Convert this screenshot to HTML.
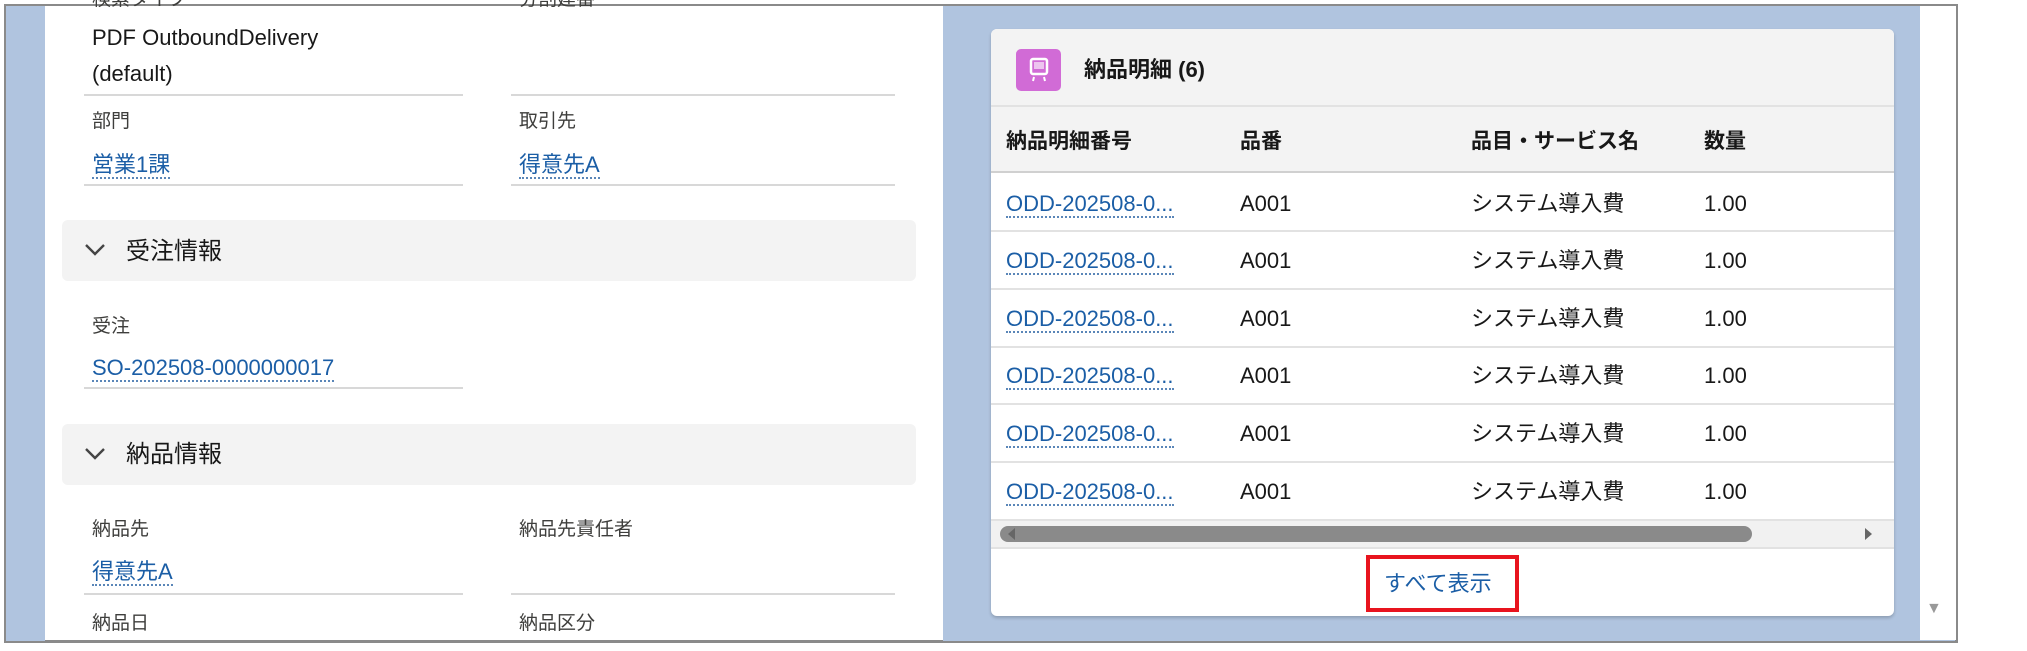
<!DOCTYPE html>
<html><head><meta charset="utf-8"><style>
*{margin:0;padding:0;box-sizing:border-box}
body{width:2027px;height:651px;background:#fff;position:relative;overflow:hidden;font-family:"Liberation Sans","Noto Sans CJK JP",sans-serif;color:#181818}
.a{position:absolute;white-space:nowrap}
.t{font-size:22px;line-height:28px;transform:translateY(-14px)}
.l{font-size:19px;line-height:24px;transform:translateY(-12px);color:#3e3e3c}
.lk{color:#1b5ea6;border-bottom:2px dotted #5a86b8;line-height:24px}
.hl{position:absolute;height:2px;background:#d8d8d8}
.rl{position:absolute;left:991px;width:903px;height:2px;background:#e2e2e2}
</style></head><body>
<div class="a" style="left:4px;top:4px;width:1954px;height:639px;background:#b0c4df;border:2px solid #8a8a8a;border-right:3px solid #8a8a8a"></div>
<div class="a" style="left:45px;top:6px;width:898px;height:634px;background:#fff"></div>
<div class="a" style="left:1920px;top:6px;width:36px;height:634px;background:#fff"></div>
<div class="a" style="left:1926px;top:600px;font-size:16px;color:#999">▼</div>

<div class="a l" style="left:92px;top:0px">検索タイプ</div>
<div class="a l" style="left:519px;top:0px">分割建番</div>
<div class="a t" style="left:92px;top:38px">PDF OutboundDelivery</div>
<div class="a t" style="left:92px;top:74px">(default)</div>
<div class="hl" style="left:84px;top:94px;width:379px"></div>
<div class="hl" style="left:511px;top:94px;width:384px"></div>
<div class="a l" style="left:92px;top:122px">部門</div>
<div class="a l" style="left:519px;top:122px">取引先</div>
<div class="a t" style="left:92px;top:165px"><span class="lk">営業1課</span></div>
<div class="a t" style="left:519px;top:165px"><span class="lk">得意先A</span></div>
<div class="hl" style="left:84px;top:184px;width:379px"></div>
<div class="hl" style="left:511px;top:184px;width:384px"></div>

<div class="a" style="left:62px;top:220px;width:854px;height:61px;background:#f3f3f3;border-radius:6px"></div>
<svg class="a" style="left:84px;top:243px" width="22" height="14"><path d="M2 2 L11 11 L20 2" fill="none" stroke="#444" stroke-width="2.4"/></svg>
<div class="a t" style="left:126px;top:252px;font-size:24px">受注情報</div>
<div class="a l" style="left:92px;top:327px">受注</div>
<div class="a t" style="left:92px;top:368px"><span class="lk">SO-202508-0000000017</span></div>
<div class="hl" style="left:84px;top:387px;width:379px"></div>

<div class="a" style="left:62px;top:424px;width:854px;height:61px;background:#f3f3f3;border-radius:6px"></div>
<svg class="a" style="left:84px;top:447px" width="22" height="14"><path d="M2 2 L11 11 L20 2" fill="none" stroke="#444" stroke-width="2.4"/></svg>
<div class="a t" style="left:126px;top:455px;font-size:24px">納品情報</div>
<div class="a l" style="left:92px;top:530px">納品先</div>
<div class="a l" style="left:519px;top:530px">納品先責任者</div>
<div class="a t" style="left:92px;top:572px"><span class="lk">得意先A</span></div>
<div class="hl" style="left:84px;top:593px;width:379px"></div>
<div class="hl" style="left:511px;top:593px;width:384px"></div>
<div class="a l" style="left:92px;top:624px">納品日</div>
<div class="a l" style="left:519px;top:624px">納品区分</div>
<div class="a" style="left:45px;top:640px;width:898px;height:3px;background:#8a8a8a"></div>

<div class="a" style="left:991px;top:29px;width:903px;height:587px;background:#fff;border-radius:6px;box-shadow:0 2px 3px rgba(0,0,0,.2)"></div>
<div class="a" style="left:991px;top:29px;width:903px;height:77px;background:#f3f3f3;border-radius:6px 6px 0 0"></div>
<div class="a" style="left:991px;top:106px;width:903px;height:66px;background:#f3f3f3"></div>
<div class="rl" style="top:105px"></div>
<div class="rl" style="top:171px;background:#d0d0d0"></div>
<div class="a" style="left:1016px;top:49px;width:45px;height:42px;background:#d16bd6;border-radius:5px"></div>
<svg class="a" style="left:1028px;top:57px" width="22" height="26"><rect x="3" y="2" width="16" height="15" rx="2" fill="none" stroke="#fff" stroke-width="2.5"/><rect x="6" y="5" width="10" height="7" fill="#fff" opacity=".6"/><path d="M6 20 L5 24 M16 20 L17 24" stroke="#fff" stroke-width="2"/></svg>
<div class="a t" style="left:1084px;top:70px;font-weight:bold;font-size:22px">納品明細 (6)</div>
<div class="a t" style="left:1006px;top:142px;font-weight:bold;font-size:21px">納品明細番号</div>
<div class="a t" style="left:1240px;top:142px;font-weight:bold;font-size:21px">品番</div>
<div class="a t" style="left:1471px;top:142px;font-weight:bold;font-size:21px">品目・サービス名</div>
<div class="a t" style="left:1704px;top:142px;font-weight:bold;font-size:21px">数量</div>

<div id="rows"></div>
<div class="rl" style="top:230px"></div><div class="rl" style="top:288px"></div><div class="rl" style="top:346px"></div><div class="rl" style="top:403px"></div><div class="rl" style="top:461px"></div><div class="rl" style="top:519px"></div><div class="rl" style="top:547px"></div>

<div class="a t" style="left:1006px;top:204px"><span class="lk">ODD-202508-0...</span></div><div class="a t" style="left:1240px;top:204px">A001</div><div class="a t" style="left:1471px;top:204px">システム導入費</div><div class="a t" style="left:1704px;top:204px">1.00</div>
<div class="a t" style="left:1006px;top:261px"><span class="lk">ODD-202508-0...</span></div><div class="a t" style="left:1240px;top:261px">A001</div><div class="a t" style="left:1471px;top:261px">システム導入費</div><div class="a t" style="left:1704px;top:261px">1.00</div>
<div class="a t" style="left:1006px;top:319px"><span class="lk">ODD-202508-0...</span></div><div class="a t" style="left:1240px;top:319px">A001</div><div class="a t" style="left:1471px;top:319px">システム導入費</div><div class="a t" style="left:1704px;top:319px">1.00</div>
<div class="a t" style="left:1006px;top:376px"><span class="lk">ODD-202508-0...</span></div><div class="a t" style="left:1240px;top:376px">A001</div><div class="a t" style="left:1471px;top:376px">システム導入費</div><div class="a t" style="left:1704px;top:376px">1.00</div>
<div class="a t" style="left:1006px;top:434px"><span class="lk">ODD-202508-0...</span></div><div class="a t" style="left:1240px;top:434px">A001</div><div class="a t" style="left:1471px;top:434px">システム導入費</div><div class="a t" style="left:1704px;top:434px">1.00</div>
<div class="a t" style="left:1006px;top:492px"><span class="lk">ODD-202508-0...</span></div><div class="a t" style="left:1240px;top:492px">A001</div><div class="a t" style="left:1471px;top:492px">システム導入費</div><div class="a t" style="left:1704px;top:492px">1.00</div>

<div class="a" style="left:991px;top:521px;width:903px;height:26px;background:#f1f1f1"></div>
<div class="a" style="left:1000px;top:526px;width:752px;height:16px;background:#8a8a8a;border-radius:8px"></div>
<svg class="a" style="left:1006px;top:527px" width="10" height="14"><path d="M9 1 L2 7 L9 13Z" fill="#666"/></svg>
<svg class="a" style="left:1864px;top:527px" width="10" height="14"><path d="M1 1 L8 7 L1 13Z" fill="#666"/></svg>

<div class="a" style="left:1366px;top:555px;width:153px;height:57px;border:4px solid #e8141e"></div>
<div class="a t" style="left:1384px;top:584px;color:#1b5ea6">すべて表示</div>
</body></html>
